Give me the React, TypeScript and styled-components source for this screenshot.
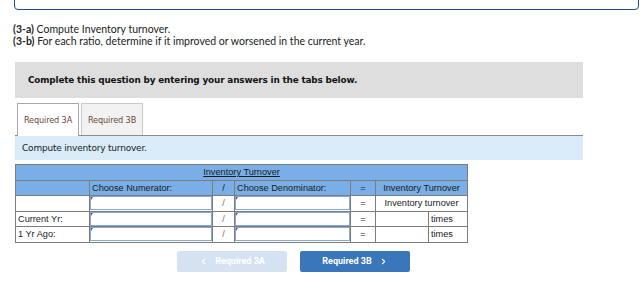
import styled, { createGlobalStyle } from 'styled-components';
import { ChevronLeft, ChevronRight } from 'lucide-react';

const GlobalStyle = createGlobalStyle`
  html, body {
    margin: 0;
    padding: 0;
    background: #ffffff;
    overflow: hidden;
  }
`;

const Page = styled.div`
  width: 644px;
  height: 297px;
  padding: 0 0 0 13px;
  box-sizing: border-box;
  display: flex;
  flex-direction: column;
`;

const TopBox = styled.div`
  margin: -12px 5px 0 1px;
  height: 20px;
  border: 1.5px solid #1f4e87;
  border-radius: 4px;
`;

const Instructions = styled.div`
  margin-top: 13px;
  font-family: Lato, 'Liberation Sans', sans-serif;
  font-size: 10.5px;
  line-height: 12px;
  color: #222;

  b {
    font-weight: 700;
  }
`;

const Panel = styled.div`
  margin: 15px 0 0 2px;
  width: 568px;
  display: flex;
  flex-direction: column;
`;

const Banner = styled.div`
  height: 36px;
  background: #dedede;
  display: flex;
  align-items: center;
  padding-left: 13px;
  font-family: 'DejaVu Sans', Verdana, sans-serif;
  font-size: 8.85px;
  font-weight: 700;
  color: #111;
  letter-spacing: -0.15px;
`;

const TabBar = styled.div`
  margin-top: 5px;
  display: flex;
  gap: 2px;
  padding-left: 2px;
  border-bottom: 1.5px solid #8a8a8a;
`;

const Tab = styled.div<{ active?: boolean }>`
  width: 62px;
  box-sizing: border-box;
  display: flex;
  align-items: center;
  justify-content: center;
  font-family: 'DejaVu Sans', Verdana, sans-serif;
  font-size: 8.2px;
  letter-spacing: -0.15px;
  color: #6b4a3a;
  background: ${({ active }) => (active ? '#ffffff' : '#f2f2f2')};
  border: 1px solid ${({ active }) => (active ? '#a9a9a9' : '#c8c8c8')};
  border-bottom: none;
  margin-bottom: ${({ active }) => (active ? '-1.5px' : '0')};
  height: ${({ active }) => (active ? '33.5px' : '32px')};
`;

const Band = styled.div`
  height: 24px;
  background: #d9ebf8;
  display: flex;
  align-items: center;
  padding-left: 7px;
  font-family: 'DejaVu Sans', Verdana, sans-serif;
  font-size: 9px;
  letter-spacing: -0.2px;
  color: #222;
`;

const Table = styled.table`
  margin-top: 4px;
  width: 452px;
  border-collapse: collapse;
  table-layout: fixed;
  font-family: 'Liberation Sans', Arial, sans-serif;
  font-size: 9.2px;
  color: #1a1a1a;
  border: 1.5px solid #7c7c7c;
`;

const Cell = styled.td<{ head?: boolean; center?: boolean }>`
  border: 1px solid #7c7c7c;
  background: ${({ head }) => (head ? '#79aee6' : '#ffffff')};
  text-align: ${({ center }) => (center ? 'center' : 'left')};
  padding: 0 2px;
  height: 14.5px;
  white-space: nowrap;
  overflow: hidden;
`;

const Title = styled.span`
  text-decoration: underline;
`;

const InputCell = styled.td`
  border: 1px solid #7c7c7c;
  padding: 0;
  height: 14.5px;
`;

const Field = styled.div`
  position: relative;
  height: 14px;
  box-sizing: border-box;
  border: 1.5px solid #8aa8cf;
  background: #ffffff;

  &::before {
    content: '';
    position: absolute;
    left: 0;
    top: 0;
    border-top: 3px solid #2c66b3;
    border-right: 2px solid transparent;
  }
`;

const Mark = styled.span`
  color: #8a6a5a;
`;

const ButtonRow = styled.div`
  margin-top: 8px;
  display: flex;
  gap: 13px;
  padding-left: 162px;
`;

const NavButton = styled.button<{ disabled?: boolean }>`
  width: 110px;
  height: 21px;
  border: none;
  border-radius: 2px;
  display: flex;
  align-items: center;
  justify-content: center;
  gap: 7px;
  font-family: Roboto, 'Liberation Sans', sans-serif;
  font-size: 9px;
  font-weight: 700;
  color: #ffffff;
  background: ${({ disabled }) => (disabled ? '#d5e2f1' : '#3a76ba')};
  padding: 0;
`;

const rows = [
  { label: '', result: 'Inventory turnover' },
  { label: 'Current Yr:', result: '' },
  { label: '1 Yr Ago:', result: '' },
];

export default function App() {
  return (
    <>
      <GlobalStyle />
      <Page>
        <TopBox />
        <Instructions>
          <div>
            <b>(3-a)</b> Compute Inventory turnover.
          </div>
          <div>
            <b>(3-b)</b> For each ratio, determine if it improved or worsened in the current year.
          </div>
        </Instructions>
        <Panel>
          <Banner>Complete this question by entering your answers in the tabs below.</Banner>
          <TabBar>
            <Tab active>Required 3A</Tab>
            <Tab>Required 3B</Tab>
          </TabBar>
          <Band>Compute inventory turnover.</Band>
          <Table>
            <colgroup>
              <col style={{ width: 74 }} />
              <col style={{ width: 123 }} />
              <col style={{ width: 22 }} />
              <col style={{ width: 116 }} />
              <col style={{ width: 25 }} />
              <col style={{ width: 53 }} />
              <col style={{ width: 39 }} />
            </colgroup>
            <tbody>
              <tr>
                <Cell head center colSpan={7}>
                  <Title>Inventory Turnover</Title>
                </Cell>
              </tr>
              <tr>
                <Cell head />
                <Cell head>Choose Numerator:</Cell>
                <Cell head center>/</Cell>
                <Cell head>Choose Denominator:</Cell>
                <Cell head center>=</Cell>
                <Cell head center colSpan={2}>
                  Inventory Turnover
                </Cell>
              </tr>
              {rows.map((row, i) => (
                <tr key={i}>
                  <Cell>{row.label}</Cell>
                  <InputCell>
                    <Field />
                  </InputCell>
                  <Cell center>
                    <Mark>/</Mark>
                  </Cell>
                  <InputCell>
                    <Field />
                  </InputCell>
                  <Cell center>=</Cell>
                  {row.result ? (
                    <Cell center colSpan={2}>
                      {row.result}
                    </Cell>
                  ) : (
                    <>
                      <Cell />
                      <Cell>times</Cell>
                    </>
                  )}
                </tr>
              ))}
            </tbody>
          </Table>
          <ButtonRow>
            <NavButton disabled>
              <ChevronLeft size={9} strokeWidth={3} />
              Required 3A
            </NavButton>
            <NavButton>
              Required 3B
              <ChevronRight size={9} strokeWidth={3} />
            </NavButton>
          </ButtonRow>
        </Panel>
      </Page>
    </>
  );
}
